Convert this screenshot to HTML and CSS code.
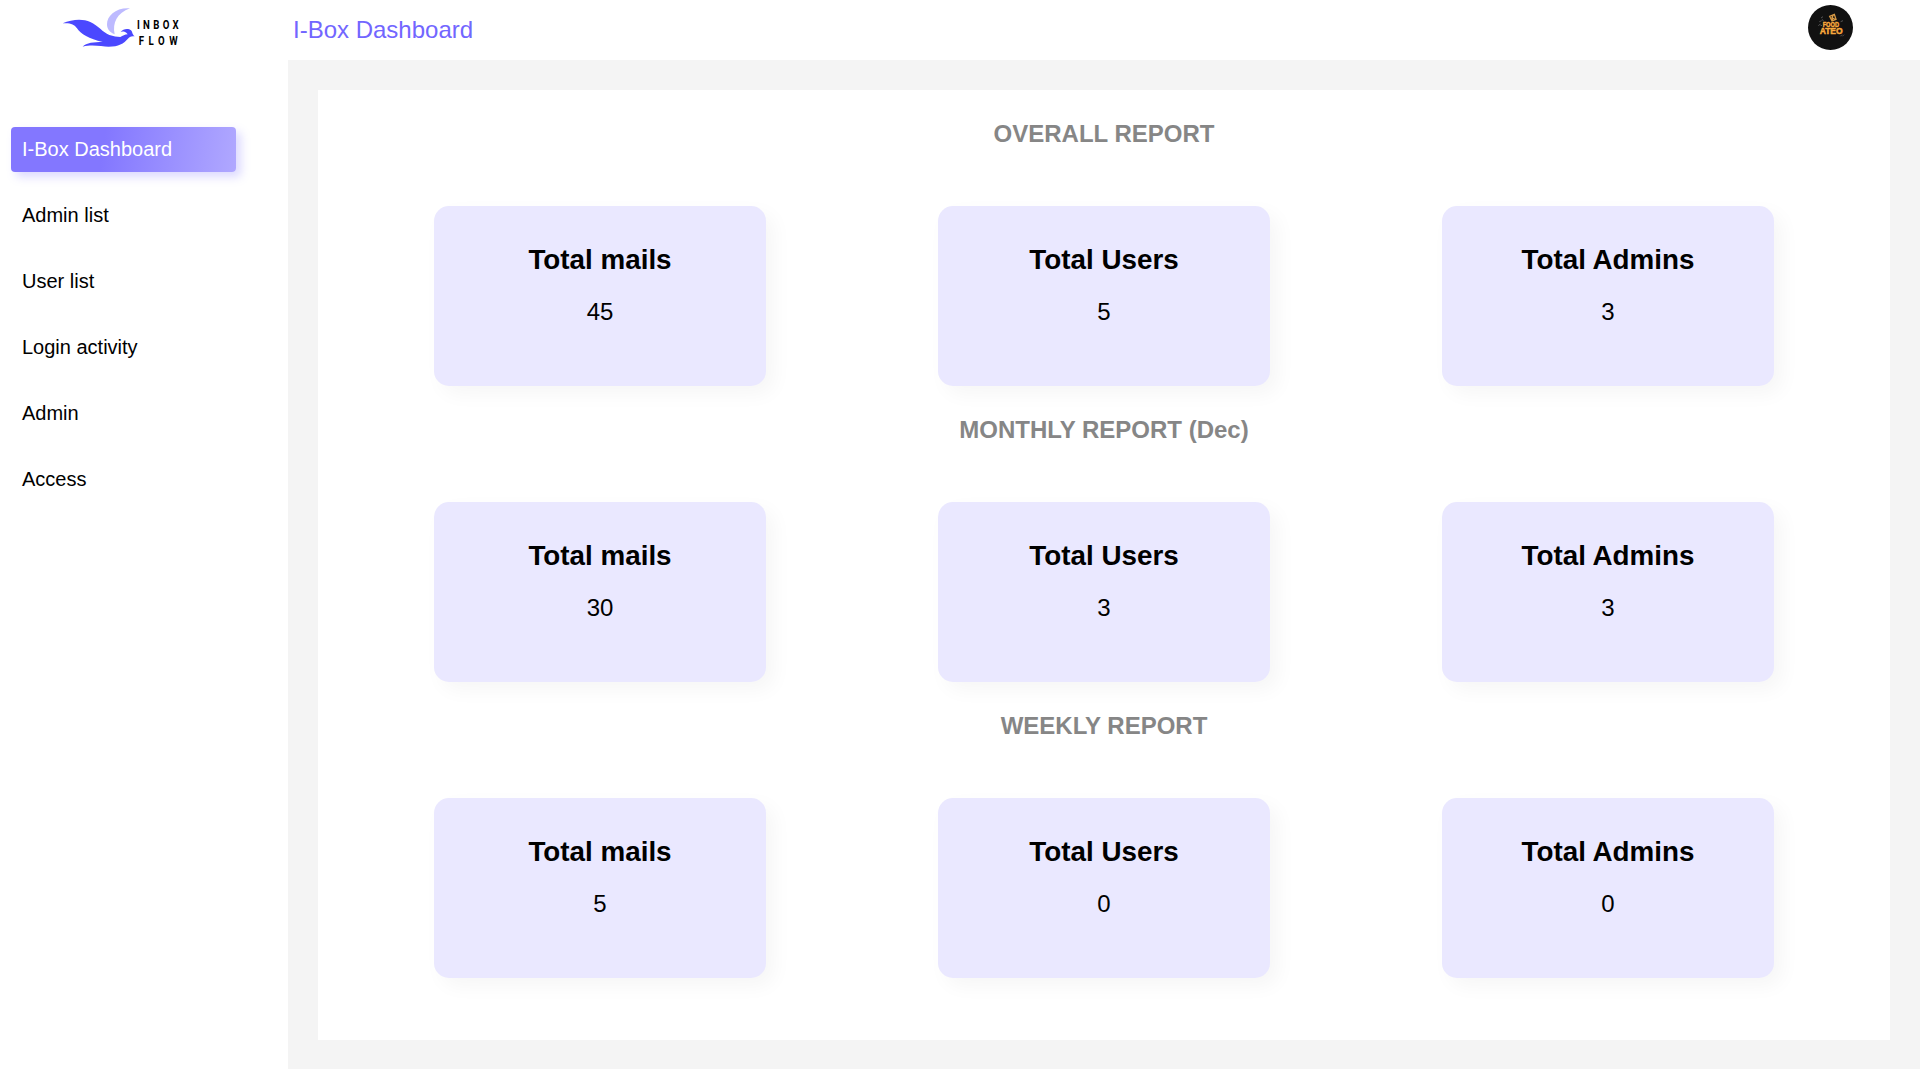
FILE: index.html
```html
<!DOCTYPE html>
<html lang="en">
<head>
<meta charset="utf-8">
<title>I-Box Dashboard</title>
<link rel="stylesheet" href="styles.css">
</head>
<body>
<div class="app">
  <aside class="sidebar">
    <svg class="logo" viewBox="0 0 420 180" role="img" aria-label="Inbox Flow">
      <path fill="#bdbaff" d="M240 25C198 22 171 47 171 73C171 87 179 97 194 103C187 68 201 40 240 25Z"/>
      <path fill="#4b48ff" d="M38 70C66 58 98 56 121 66C145 77 158 97 178 105C190 109 201 111 211 111C219 108 224 103 233 103C224 92 215 95 212 96C219 86 235 84 243 91C249 97 245 102 254 109C246 109 241 109 236 114C220 132 206 140 176 140C155 140 128 132 98 140C109 128 132 126 158 126C118 117 91 102 81 85C73 72 59 68 38 70Z"/>
      <g class="logo-text">
        <text transform="translate(261 86) scale(0.78 1)" textLength="160">INBOX</text>
        <text transform="translate(266 134) scale(0.78 1)" textLength="150">FLOW</text>
      </g>
    </svg>
    <nav class="menu">
      <a class="item active">I-Box Dashboard</a>
      <a class="item">Admin list</a>
      <a class="item">User list</a>
      <a class="item">Login activity</a>
      <a class="item">Admin</a>
      <a class="item">Access</a>
    </nav>
  </aside>
  <div class="main">
    <header class="topbar">
      <span class="page-title">I-Box Dashboard</span>
      <svg class="avatar" viewBox="0 0 135 135" role="img" aria-label="Food Ateo">
        <circle cx="67.5" cy="67.5" r="67.5" fill="#111"/>
        <path fill="none" stroke="#d99a45" stroke-width="4" d="M65 34L79 28L84 43L72 48ZM70 38L80 42M74 31L73 47"/>
        <path fill="none" stroke="#777" stroke-width="2" d="M39 39l6 -4M34 50l7 -3M31 62l6 -5M43 43l3 5M98 50l7 -3M97 94l5 -5M103 94l5 -5M37 60l5 2"/>
        <g class="avatar-text">
          <text x="44" y="66" textLength="49" lengthAdjust="spacingAndGlyphs" font-size="23">FOOD</text>
          <text x="35" y="87" textLength="69" lengthAdjust="spacingAndGlyphs" font-size="27">ATEO</text>
        </g>
      </svg>
    </header>
    <main class="panel">
      <section class="report">
        <h2>OVERALL REPORT</h2>
        <div class="cards">
          <div class="card"><h3>Total mails</h3><p>45</p></div>
          <div class="card"><h3>Total Users</h3><p>5</p></div>
          <div class="card"><h3>Total Admins</h3><p>3</p></div>
        </div>
      </section>
      <section class="report">
        <h2>MONTHLY REPORT (Dec)</h2>
        <div class="cards">
          <div class="card"><h3>Total mails</h3><p>30</p></div>
          <div class="card"><h3>Total Users</h3><p>3</p></div>
          <div class="card"><h3>Total Admins</h3><p>3</p></div>
        </div>
      </section>
      <section class="report">
        <h2>WEEKLY REPORT</h2>
        <div class="cards">
          <div class="card"><h3>Total mails</h3><p>5</p></div>
          <div class="card"><h3>Total Users</h3><p>0</p></div>
          <div class="card"><h3>Total Admins</h3><p>0</p></div>
        </div>
      </section>
    </main>
  </div>
</div>
</body>
</html>
```
FILE: styles.css
```css
* {
  box-sizing: border-box;
  margin: 0;
  padding: 0;
}

body {
  font-family: "Liberation Sans", Arial, sans-serif;
  color: #000;
  background: #fff;
}

.app {
  display: flex;
  height: 1069px;
  overflow: hidden;
}

.sidebar {
  flex: 0 0 288px;
  background: #fff;
}

.logo {
  display: block;
  width: 140px;
  height: 60px;
  margin-left: 50px;
}

.logo-text {
  font-family: Roboto, sans-serif;
  font-size: 37px;
  font-weight: 700;
}

.menu {
  display: flex;
  flex-direction: column;
  gap: 21px;
  width: 225px;
  margin: 67px 0 0 11px;
}

.item {
  height: 45px;
  padding-left: 11px;
  font-size: 20px;
  line-height: 44px;
  border-radius: 4px;
}

.item.active {
  color: #fff;
  background: linear-gradient(98deg, #8377ff 0%, #8377ff 41%, #b0a8ff 100%);
  box-shadow: 5px 5px 10px rgba(129, 118, 255, 0.28);
}

.main {
  flex: 1;
  display: flex;
  flex-direction: column;
  background: #f4f4f4;
}

.topbar {
  display: flex;
  justify-content: space-between;
  height: 60px;
  padding: 5px 67px 0 5px;
  background: #fff;
}

.page-title {
  font-size: 24px;
  line-height: 50px;
  color: #7266ff;
}

.avatar {
  width: 45px;
  height: 45px;
}

.avatar-text {
  font-family: "Liberation Sans", Arial, sans-serif;
  font-weight: 700;
  fill: #f9a83c;
  stroke: #f9a83c;
  stroke-width: 1.5px;
}

.panel {
  flex: none;
  height: 950px;
  margin: 30px 30px 0;
  padding: 0 30px;
  background: #fff;
}

.report {
  height: 296px;
  padding-top: 30px;
}

.report h2 {
  height: 86px;
  font-size: 24px;
  line-height: 28px;
  text-align: center;
  color: #868686;
}

.cards {
  display: flex;
  justify-content: space-around;
}

.card {
  width: 332px;
  height: 180px;
  padding-top: 38px;
  text-align: center;
  background: #eae8ff;
  border-radius: 15px;
  box-shadow: 8px 8px 20px rgba(0, 0, 0, 0.04);
}

.card h3 {
  font-size: 27.8px;
  line-height: 32px;
}

.card p {
  margin-top: 22px;
  font-size: 24px;
  line-height: 28px;
}
```
